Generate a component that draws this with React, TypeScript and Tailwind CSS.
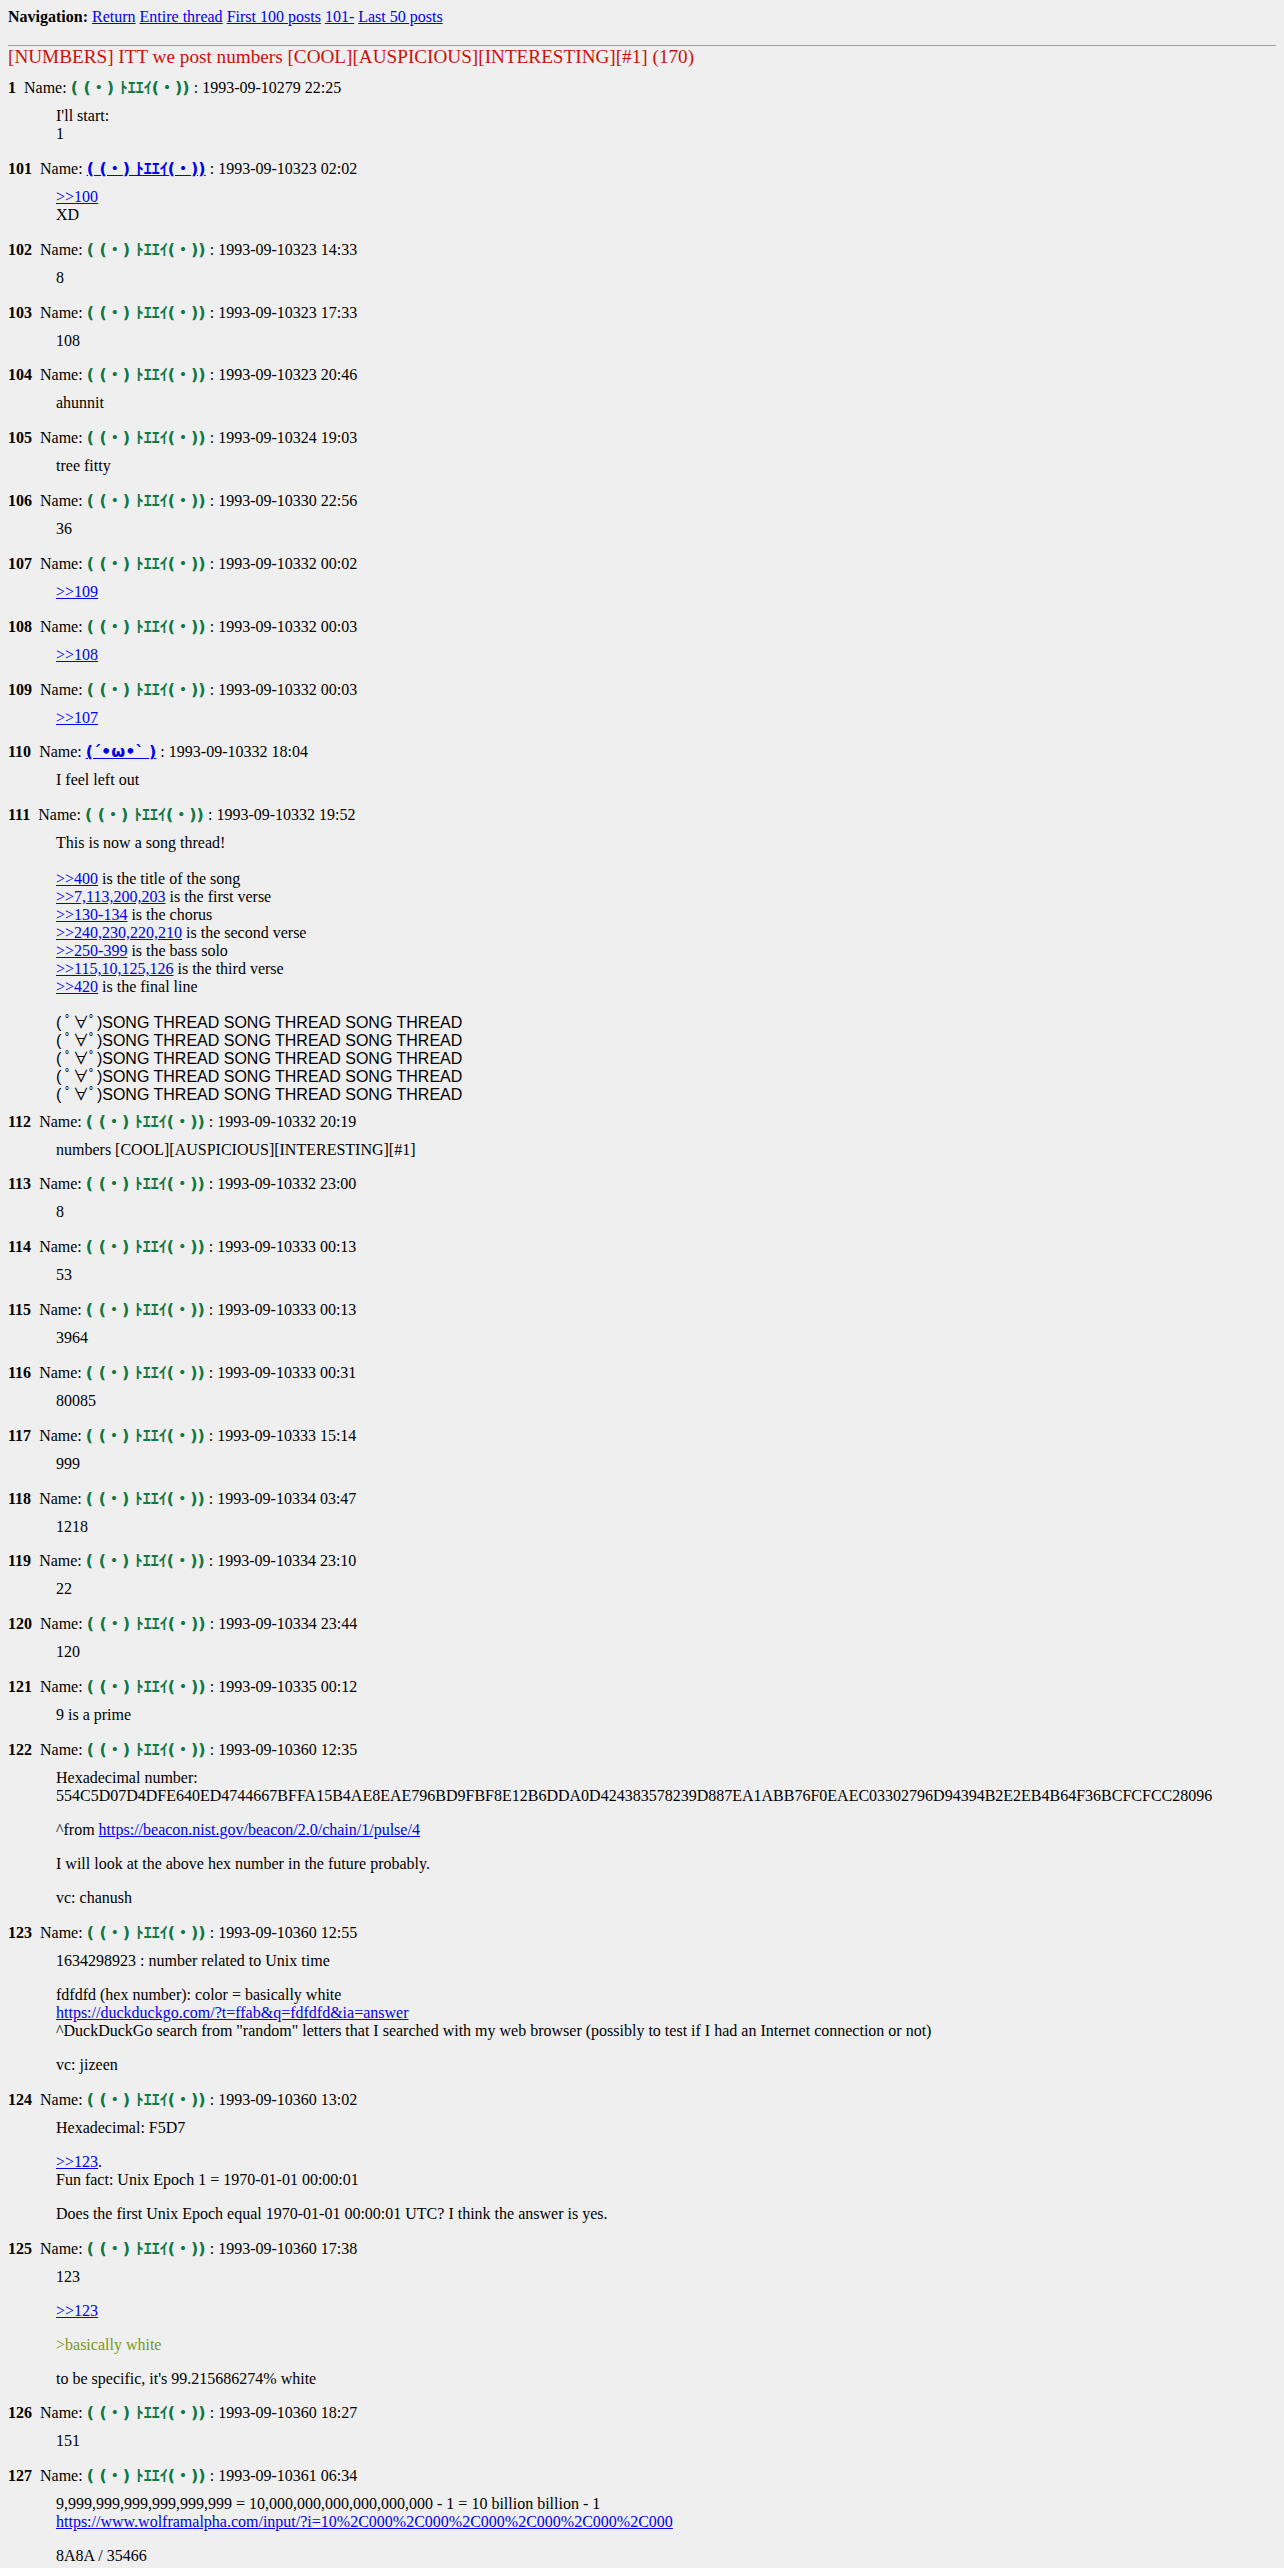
import type { ReactNode } from "react";

type Post = {
  n: number;
  date: string;
  name?: "plain" | "mail" | "wink";
  paras: ReactNode[][];
  gap?: string;
  tail?: string;
};

const SONG = "( ﾟ∀ﾟ)SONG THREAD SONG THREAD SONG THREAD";
const HEX =
  "554C5D07D4DFE640ED4744667BFFA15B4AE8EAE796BD9FBF8E12B6DDA0D424383578239D887EA1ABB76F0EAEC03302796D94394B2E2EB4B64F36BCFCFCC28096";

function L({ children }: { children: ReactNode }) {
  return <a className="text-[#0000ee] underline">{children}</a>;
}

function Name({ kind }: { kind: Post["name"] }) {
  const face = "font-bold font-['DejaVu_Sans','Noto_Sans_CJK_JP',sans-serif]";
  if (kind === "mail") return <a className={`${face} text-[#0000ee] underline`}>( (・) ﾄｴｴｲ(・))</a>;
  if (kind === "wink") return <a className={`${face} text-[#0000ee] underline`}>(´•ω•` )</a>;
  return <span className={`${face} text-[#117743]`}>( (・) ﾄｴｴｲ(・))</span>;
}

const song = [SONG, SONG, SONG, SONG, SONG].map((s, i) => (
  <span key={i} className="font-['Liberation_Sans','Noto_Sans_CJK_JP',sans-serif]">
    {s}
  </span>
));

const posts: Post[] = [
  { n: 1, date: "1993-09-10279 22:25", paras: [["I'll start:", "1"]] },
  { n: 101, date: "1993-09-10323 02:02", name: "mail", paras: [[<L>{">>100"}</L>, "XD"]] },
  { n: 102, date: "1993-09-10323 14:33", paras: [["8"]] },
  { n: 103, date: "1993-09-10323 17:33", paras: [["108"]] },
  { n: 104, date: "1993-09-10323 20:46", paras: [["ahunnit"]] },
  { n: 105, date: "1993-09-10324 19:03", paras: [["tree fitty"]] },
  { n: 106, date: "1993-09-10330 22:56", paras: [["36"]] },
  { n: 107, date: "1993-09-10332 00:02", paras: [[<L>{">>109"}</L>]] },
  { n: 108, date: "1993-09-10332 00:03", paras: [[<L>{">>108"}</L>]] },
  { n: 109, date: "1993-09-10332 00:03", paras: [[<L>{">>107"}</L>]] },
  { n: 110, date: "1993-09-10332 18:04", name: "wink", paras: [["I feel left out"]] },
  {
    n: 111,
    date: "1993-09-10332 19:52",
    gap: "gap-[18px]",
    tail: "mb-[8.3px]",
    paras: [
      ["This is now a song thread!"],
      [
        <><L>{">>400"}</L> is the title of the song</>,
        <><L>{">>7,113,200,203"}</L> is the first verse</>,
        <><L>{">>130-134"}</L> is the chorus</>,
        <><L>{">>240,230,220,210"}</L> is the second verse</>,
        <><L>{">>250-399"}</L> is the bass solo</>,
        <><L>{">>115,10,125,126"}</L> is the third verse</>,
        <><L>{">>420"}</L> is the final line</>,
      ],
      song,
    ],
  },
  { n: 112, date: "1993-09-10332 20:19", paras: [["numbers [COOL][AUSPICIOUS][INTERESTING][#1]"]] },
  { n: 113, date: "1993-09-10332 23:00", paras: [["8"]] },
  { n: 114, date: "1993-09-10333 00:13", paras: [["53"]] },
  { n: 115, date: "1993-09-10333 00:13", paras: [["3964"]] },
  { n: 116, date: "1993-09-10333 00:31", paras: [["80085"]] },
  { n: 117, date: "1993-09-10333 15:14", paras: [["999"]] },
  { n: 118, date: "1993-09-10334 03:47", paras: [["1218"]] },
  { n: 119, date: "1993-09-10334 23:10", paras: [["22"]] },
  { n: 120, date: "1993-09-10334 23:44", paras: [["120"]] },
  { n: 121, date: "1993-09-10335 00:12", paras: [["9 is a prime"]] },
  {
    n: 122,
    date: "1993-09-10360 12:35",
    paras: [
      ["Hexadecimal number:", HEX],
      [<>^from <L>https://beacon.nist.gov/beacon/2.0/chain/1/pulse/4</L></>],
      ["I will look at the above hex number in the future probably."],
      ["vc: chanush"],
    ],
  },
  {
    n: 123,
    date: "1993-09-10360 12:55",
    paras: [
      ["1634298923 : number related to Unix time"],
      [
        "fdfdfd (hex number): color = basically white",
        <L>https://duckduckgo.com/?t=ffab&amp;q=fdfdfd&amp;ia=answer</L>,
        '^DuckDuckGo search from "random" letters that I searched with my web browser (possibly to test if I had an Internet connection or not)',
      ],
      ["vc: jizeen"],
    ],
  },
  {
    n: 124,
    date: "1993-09-10360 13:02",
    paras: [
      ["Hexadecimal: F5D7"],
      [<><L>{">>123"}</L>.</>, "Fun fact: Unix Epoch 1 = 1970-01-01 00:00:01"],
      ["Does the first Unix Epoch equal 1970-01-01 00:00:01 UTC? I think the answer is yes."],
    ],
  },
  {
    n: 125,
    date: "1993-09-10360 17:38",
    paras: [
      ["123"],
      [<L>{">>123"}</L>],
      [<span className="text-[#789922]">{">basically white"}</span>],
      ["to be specific, it's 99.215686274% white"],
    ],
  },
  { n: 126, date: "1993-09-10360 18:27", paras: [["151"]] },
  {
    n: 127,
    date: "1993-09-10361 06:34",
    paras: [
      [
        "9,999,999,999,999,999,999 = 10,000,000,000,000,000,000 - 1 = 10 billion billion - 1",
        <L>https://www.wolframalpha.com/input/?i=10%2C000%2C000%2C000%2C000%2C000%2C000</L>,
      ],
      ["8A8A / 35466"],
    ],
  },
];

function PostView({ p }: { p: Post }) {
  return (
    <div className={p.tail ?? "mb-[16.85px]"}>
      <div>
        <b>{p.n}</b>
        {"\u00a0 Name: "}
        <Name kind={p.name} />
        {" : "}
        {p.date}
      </div>
      <div className={`ml-12 mt-[10px] flex flex-col ${p.gap ?? "gap-[16px]"}`}>
        {p.paras.map((para, i) => (
          <div key={i} className="flex flex-col">
            {para.map((line, j) => (
              <div key={j} className="whitespace-nowrap">
                {line}
              </div>
            ))}
          </div>
        ))}
      </div>
    </div>
  );
}

export default function App() {
  return (
    <div className="min-h-screen bg-[#efefef] p-2 font-['Liberation_Serif',serif] text-[16px] leading-[18px] text-black">
      <div>
        <b>Navigation:</b> <L>Return</L> <L>Entire thread</L> <L>First 100 posts</L> <L>101-</L>{" "}
        <L>Last 50 posts</L>
      </div>
      <div className="mt-[19px] h-px bg-[#a0a0a0]" />
      <h2 className="text-[19.2px] leading-[22px] text-[#cc1105]">
        [NUMBERS] ITT we post numbers [COOL][AUSPICIOUS][INTERESTING][#1] (170)
      </h2>
      <div className="mt-[11px]">
        {posts.map((p) => (
          <PostView key={p.n} p={p} />
        ))}
      </div>
    </div>
  );
}
